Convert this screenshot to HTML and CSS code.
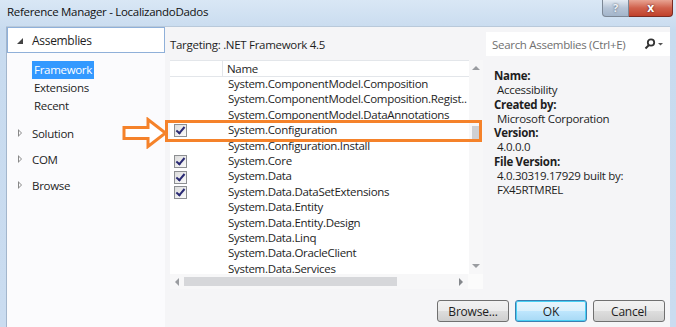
FILE: index.html
```html
<!DOCTYPE html>
<html lang="en">
<head>
    <meta charset="UTF-8">
    <title>Reference Manager - LocalizandoDados</title>
    <link rel="stylesheet" href="styles.css">
</head>
<body>
    <div class="window">
        <div class="titlebar">
            <span class="title">Reference Manager - LocalizandoDados</span>
            <div class="caption">
                <span class="cap-help">?</span>
                <span class="cap-close">x</span>
            </div>
        </div>
        <div class="client">
            <div class="nav">
                <div class="nav-head"><span class="tri-down"></span>Assemblies</div>
                <div class="nav-sub">
                    <div class="nav-item selected">Framework</div>
                    <div class="nav-item">Extensions</div>
                    <div class="nav-item">Recent</div>
                </div>
                <div class="nav-group"><span class="tri-right"></span>Solution</div>
                <div class="nav-group"><span class="tri-right"></span>COM</div>
                <div class="nav-group"><span class="tri-right"></span>Browse</div>
            </div>
            <div class="main">
                <div class="target">Targeting: .NET Framework 4.5</div>
                <div class="list">
                    <div class="list-view">
                        <div class="list-body">
                            <div class="row head"><span class="cell-check"></span><span class="cell-name">Name</span></div>
                            <div class="row"><span class="cell-check"></span><span class="cell-name">System.ComponentModel.Composition</span></div>
                            <div class="row"><span class="cell-check"></span><span class="cell-name">System.ComponentModel.Composition.Regist..</span></div>
                            <div class="row"><span class="cell-check"></span><span class="cell-name">System.ComponentModel.DataAnnotations</span></div>
                            <div class="row marked"><span class="cell-check"><span class="box on"></span></span><span class="cell-name">System.Configuration</span></div>
                            <div class="row"><span class="cell-check"></span><span class="cell-name">System.Configuration.Install</span></div>
                            <div class="row"><span class="cell-check"><span class="box on"></span></span><span class="cell-name">System.Core</span></div>
                            <div class="row"><span class="cell-check"><span class="box on"></span></span><span class="cell-name">System.Data</span></div>
                            <div class="row"><span class="cell-check"><span class="box on"></span></span><span class="cell-name">System.Data.DataSetExtensions</span></div>
                            <div class="row"><span class="cell-check"></span><span class="cell-name">System.Data.Entity</span></div>
                            <div class="row"><span class="cell-check"></span><span class="cell-name">System.Data.Entity.Design</span></div>
                            <div class="row"><span class="cell-check"></span><span class="cell-name">System.Data.Linq</span></div>
                            <div class="row"><span class="cell-check"></span><span class="cell-name">System.Data.OracleClient</span></div>
                            <div class="row"><span class="cell-check"></span><span class="cell-name">System.Data.Services</span></div>
                        </div>
                        <div class="vscroll">
                            <span class="arr-up"></span>
                            <span class="vtrack"><span class="vthumb"></span></span>
                            <span class="arr-down"></span>
                        </div>
                    </div>
                    <div class="hscroll">
                        <span class="arr-left"></span>
                        <span class="htrack"><span class="hthumb"></span></span>
                        <span class="arr-right"></span>
                        <span class="corner"></span>
                    </div>
                    <div class="highlight"></div>
                    <svg class="pointer" width="46" height="32" viewBox="0 0 46 32">
                        <path d="M2 10.5 H26 V2.5 L43.5 16 L26 29.5 V21.5 H2 Z" fill="#fff" stroke="#f5822a" stroke-width="3" stroke-linejoin="miter"/>
                    </svg>
                </div>
            </div>
            <div class="details">
                <div class="search">
                    <span class="search-text">Search Assemblies (Ctrl+E)</span>
                    <svg class="search-icon" width="20" height="12" viewBox="0 0 20 12">
                        <circle cx="7" cy="4.5" r="3.2" fill="none" stroke="#333" stroke-width="1.8"/>
                        <path d="M5 7 L1.5 10.5" stroke="#333" stroke-width="2"/>
                        <path d="M14 5 H19 L16.5 7.5 Z" fill="#555"/>
                    </svg>
                </div>
                <div class="info">
                    <div class="label">Name:</div>
                    <div class="value">Accessibility</div>
                    <div class="label">Created by:</div>
                    <div class="value">Microsoft Corporation</div>
                    <div class="label">Version:</div>
                    <div class="value">4.0.0.0</div>
                    <div class="label">File Version:</div>
                    <div class="value">4.0.30319.17929 built by:</div>
                    <div class="value">FX45RTMREL</div>
                </div>
            </div>
            <div class="buttons">
                <button class="btn">Browse...</button>
                <button class="btn default">OK</button>
                <button class="btn">Cancel</button>
            </div>
        </div>
    </div>
</body>
</html>
```

FILE: styles.css
```css
body {
    margin: 0;
    padding: 0;
    font-family: "Open Sans", "Noto Sans", sans-serif;
    font-size: 11.5px;
    letter-spacing: -0.3px;
    color: #1e1e1e;
    background: #cfe0f2;
    overflow: hidden;
}
.window {
    width: 676px;
    height: 327px;
    display: flex;
    flex-direction: column;
    background: linear-gradient(180deg, #d9e7f5, #c8dbef 30px, #cadcf0);
}
.titlebar {
    height: 26px;
    display: flex;
    justify-content: space-between;
    flex-shrink: 0;
}
.title {
    padding: 4px 0 0 7px;
    color: #111;
}
.caption {
    display: flex;
    height: 17px;
    margin-right: 3px;
}
.cap-help {
    width: 25px;
    text-align: center;
    font-weight: bold;
    font-size: 11px;
    line-height: 16px;
    color: #eef2f7;
    text-shadow: 0 0 2px #404a58;
    background: linear-gradient(180deg, #e4ebf3, #b6c4d6 50%, #a3b5ca);
    border: 1px solid #7c8795;
    border-top: none;
    border-radius: 0 0 0 4px;
}
.cap-close {
    width: 43px;
    text-align: center;
    font-weight: bold;
    font-size: 12px;
    line-height: 15px;
    color: #fff;
    text-shadow: 0 0 2px #4a1010;
    background: linear-gradient(180deg, #e8a493, #d0614c 50%, #c0412b);
    border: 1px solid #7a2b22;
    border-top: none;
    border-left: none;
    border-radius: 0 0 4px 0;
}
.client {
    flex: 1;
    margin: 0 6px 0 6px;
    display: grid;
    grid-template-columns: 159px 318px 1fr;
    grid-template-rows: 1fr 38px;
    background: #f5f5f7;
    border-top: 1px solid #b9c9da;
}
.nav {
    grid-row: 1 / 3;
    background: #fbfbfd;
    border-left: 1px solid #a3b6cc;
}
.nav-head {
    height: 24px;
    border: 1px solid #8fb0d9;
    display: flex;
    align-items: center;
    padding-left: 9px;
    background: #fff;
    font-size: 12px;
}
.tri-down {
    width: 0;
    height: 0;
    border-left: 6px solid transparent;
    border-bottom: 6px solid #444;
    margin-right: 9px;
    margin-top: 2px;
}
.nav-sub {
    padding: 8px 0 5px 25px;
}
.nav-sub .nav-item {
    display: block;
    width: max-content;
    height: 18px;
    line-height: 18px;
    padding-left: 2px;
}
.nav-item.selected {
    background: #3399ff;
    color: #fff;
    padding-right: 2px;
}
.nav-group {
    height: 26px;
    display: flex;
    align-items: center;
    padding-left: 11px;
}
.tri-right {
    width: 0;
    height: 0;
    border-top: 4px solid transparent;
    border-bottom: 4px solid transparent;
    border-left: 4px solid #888;
    margin-right: 10px;
    position: relative;
}
.tri-right::after {
    content: "";
    position: absolute;
    left: -3px;
    top: -2px;
    border-top: 2px solid transparent;
    border-bottom: 2px solid transparent;
    border-left: 2px solid #fbfbfd;
}
.main {
    padding-left: 5px;
}
.target {
    height: 33px;
    line-height: 36px;
}
.list {
    width: 313px;
    position: relative;
    background: #fff;
}
.list-view {
    display: flex;
    height: 214px;
}
.list-body {
    flex: 1;
    overflow: hidden;
}
.row {
    display: flex;
    height: 15.4px;
    line-height: 14.6px;
    white-space: nowrap;
}
.row.head {
    height: 15px;
    line-height: 15px;
    border-top: 1px solid #e3e6ea;
    border-bottom: 1px solid #e3e6ea;
}
.cell-check {
    width: 53px;
    flex-shrink: 0;
    display: flex;
    align-items: center;
    padding-left: 4px;
    box-sizing: border-box;
}
.row.head .cell-check {
    border-right: 1px solid #e3e6ea;
}
.cell-name {
    padding-left: 5px;
}
.row.head .cell-name {
    padding-left: 4px;
}
.box {
    width: 11px;
    height: 11px;
    border: 1px solid #8d8f92;
    background: linear-gradient(135deg, #dcdcdc, #fbfbfb);
    position: relative;
}
.box.on::after {
    content: "";
    position: absolute;
    left: 3px;
    top: 0px;
    width: 3px;
    height: 7px;
    border-right: 2px solid #2a2a74;
    border-bottom: 2px solid #2a2a74;
    transform: rotate(40deg);
}
.vscroll {
    width: 14px;
    display: flex;
    flex-direction: column;
    align-items: center;
    background: #f7f7f8;
}
.arr-up, .arr-down {
    width: 0;
    height: 0;
    border-left: 4px solid transparent;
    border-right: 4px solid transparent;
    margin: 6px 0;
}
.arr-up {
    border-bottom: 4px solid #9a9ca0;
}
.arr-down {
    border-top: 4px solid #9a9ca0;
}
.vtrack {
    flex: 1;
    width: 8px;
}
.vthumb {
    display: block;
    margin-top: 50px;
    height: 13px;
    width: 8px;
    background: #cfd0d3;
}
.hscroll {
    height: 15px;
    display: flex;
    align-items: center;
    background: #f7f7f8;
}
.arr-left, .arr-right {
    width: 0;
    height: 0;
    border-top: 4px solid transparent;
    border-bottom: 4px solid transparent;
    margin: 0 5px;
}
.arr-left {
    border-right: 4px solid #9a9ca0;
}
.arr-right {
    border-left: 4px solid #84878b;
}
.htrack {
    flex: 1;
}
.hthumb {
    display: block;
    width: 213px;
    height: 9px;
    background: #d6d7da;
}
.corner {
    width: 15px;
    height: 15px;
    background: #fbfbfb;
}
.highlight {
    position: absolute;
    left: -5px;
    top: 60px;
    width: 311px;
    height: 16px;
    border: 3px solid #f5822a;
    pointer-events: none;
}
.pointer {
    position: absolute;
    left: -48px;
    top: 57px;
}
.details {
    padding: 5px 0 0 3px;
}
.search {
    height: 24px;
    background: #fff;
    display: flex;
    align-items: center;
    justify-content: space-between;
    padding: 0 6px 0 6px;
}
.search-text {
    color: #707070;
}
.info {
    padding: 13px 0 0 8px;
    line-height: 14.3px;
}
.label {
    font-weight: bold;
}
.value {
    padding-left: 3px;
}
.buttons {
    grid-column: 2 / 4;
    display: flex;
    justify-content: flex-end;
    gap: 6px;
    padding: 11px 5px 0 0;
}
.btn {
    width: 72px;
    height: 22px;
    font-family: inherit;
    font-size: 12px;
    letter-spacing: -0.2px;
    color: #1e1e1e;
    border: 1px solid #707070;
    border-radius: 3px;
    background: linear-gradient(180deg, #f2f2f2, #ebebeb 50%, #dddddd 51%, #cfcfcf);
    padding: 0;
}
.btn.default {
    border-color: #3c7fb1;
    box-shadow: inset 0 0 0 1px #48d0f4;
    background: linear-gradient(180deg, #eaf6fd, #d9f0fc 50%, #bee6fd 51%, #a7d9f5);
}
```
